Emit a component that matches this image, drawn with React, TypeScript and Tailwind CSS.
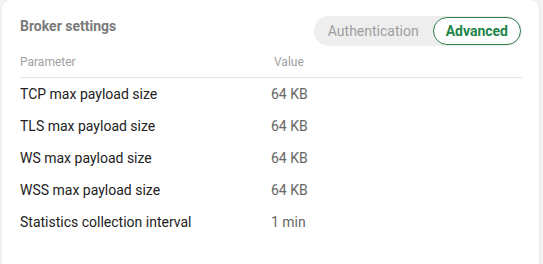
const ROWS: { name: string; value: string }[] = [
  { name: "TCP max payload size", value: "64 KB" },
  { name: "TLS max payload size", value: "64 KB" },
  { name: "WS max payload size", value: "64 KB" },
  { name: "WSS max payload size", value: "64 KB" },
  { name: "Statistics collection interval", value: "1 min" },
];

export default function App() {
  return (
    <div className="h-[264px] w-[543px] overflow-hidden bg-[#f4f4f4] pl-[2px] pr-[4px] font-['Roboto',sans-serif]">
      <div className="h-[290px] rounded-lg bg-white shadow-[0_0_2px_rgba(0,0,0,0.12)] pl-[18px] pr-[17px] pt-[16px]">
        <div className="flex items-start justify-between">
          <h2 className="mt-[1px] text-[14px] font-bold leading-[18px] text-[#7a7a7a]">Broker settings</h2>
          <div className="flex h-[30px] items-center rounded-full bg-[#eeeeee] pl-[14px] pr-[1px]">
            <span className="pr-[14px] text-[14px] text-[#9e9e9e]">Authentication</span>
            <button className="h-[28px] rounded-full border border-[#2e7d4f] bg-white px-[12px] text-[14px] font-bold text-[#1e8449]">
              Advanced
            </button>
          </div>
        </div>
        <div className="mt-[9px] flex h-[23px] items-start border-b border-[#e3e3e3] text-[12px] leading-[14px] text-[#a0a0a0]">
          <span className="w-[254px]">Parameter</span>
          <span>Value</span>
        </div>
        <div>
          {ROWS.map((r) => (
            <div key={r.name} className="flex h-[32px] items-center text-[14px]">
              <span className="w-[251px] text-[#222222]">{r.name}</span>
              <span className="text-[#666666]">{r.value}</span>
            </div>
          ))}
        </div>
      </div>
    </div>
  );
}
